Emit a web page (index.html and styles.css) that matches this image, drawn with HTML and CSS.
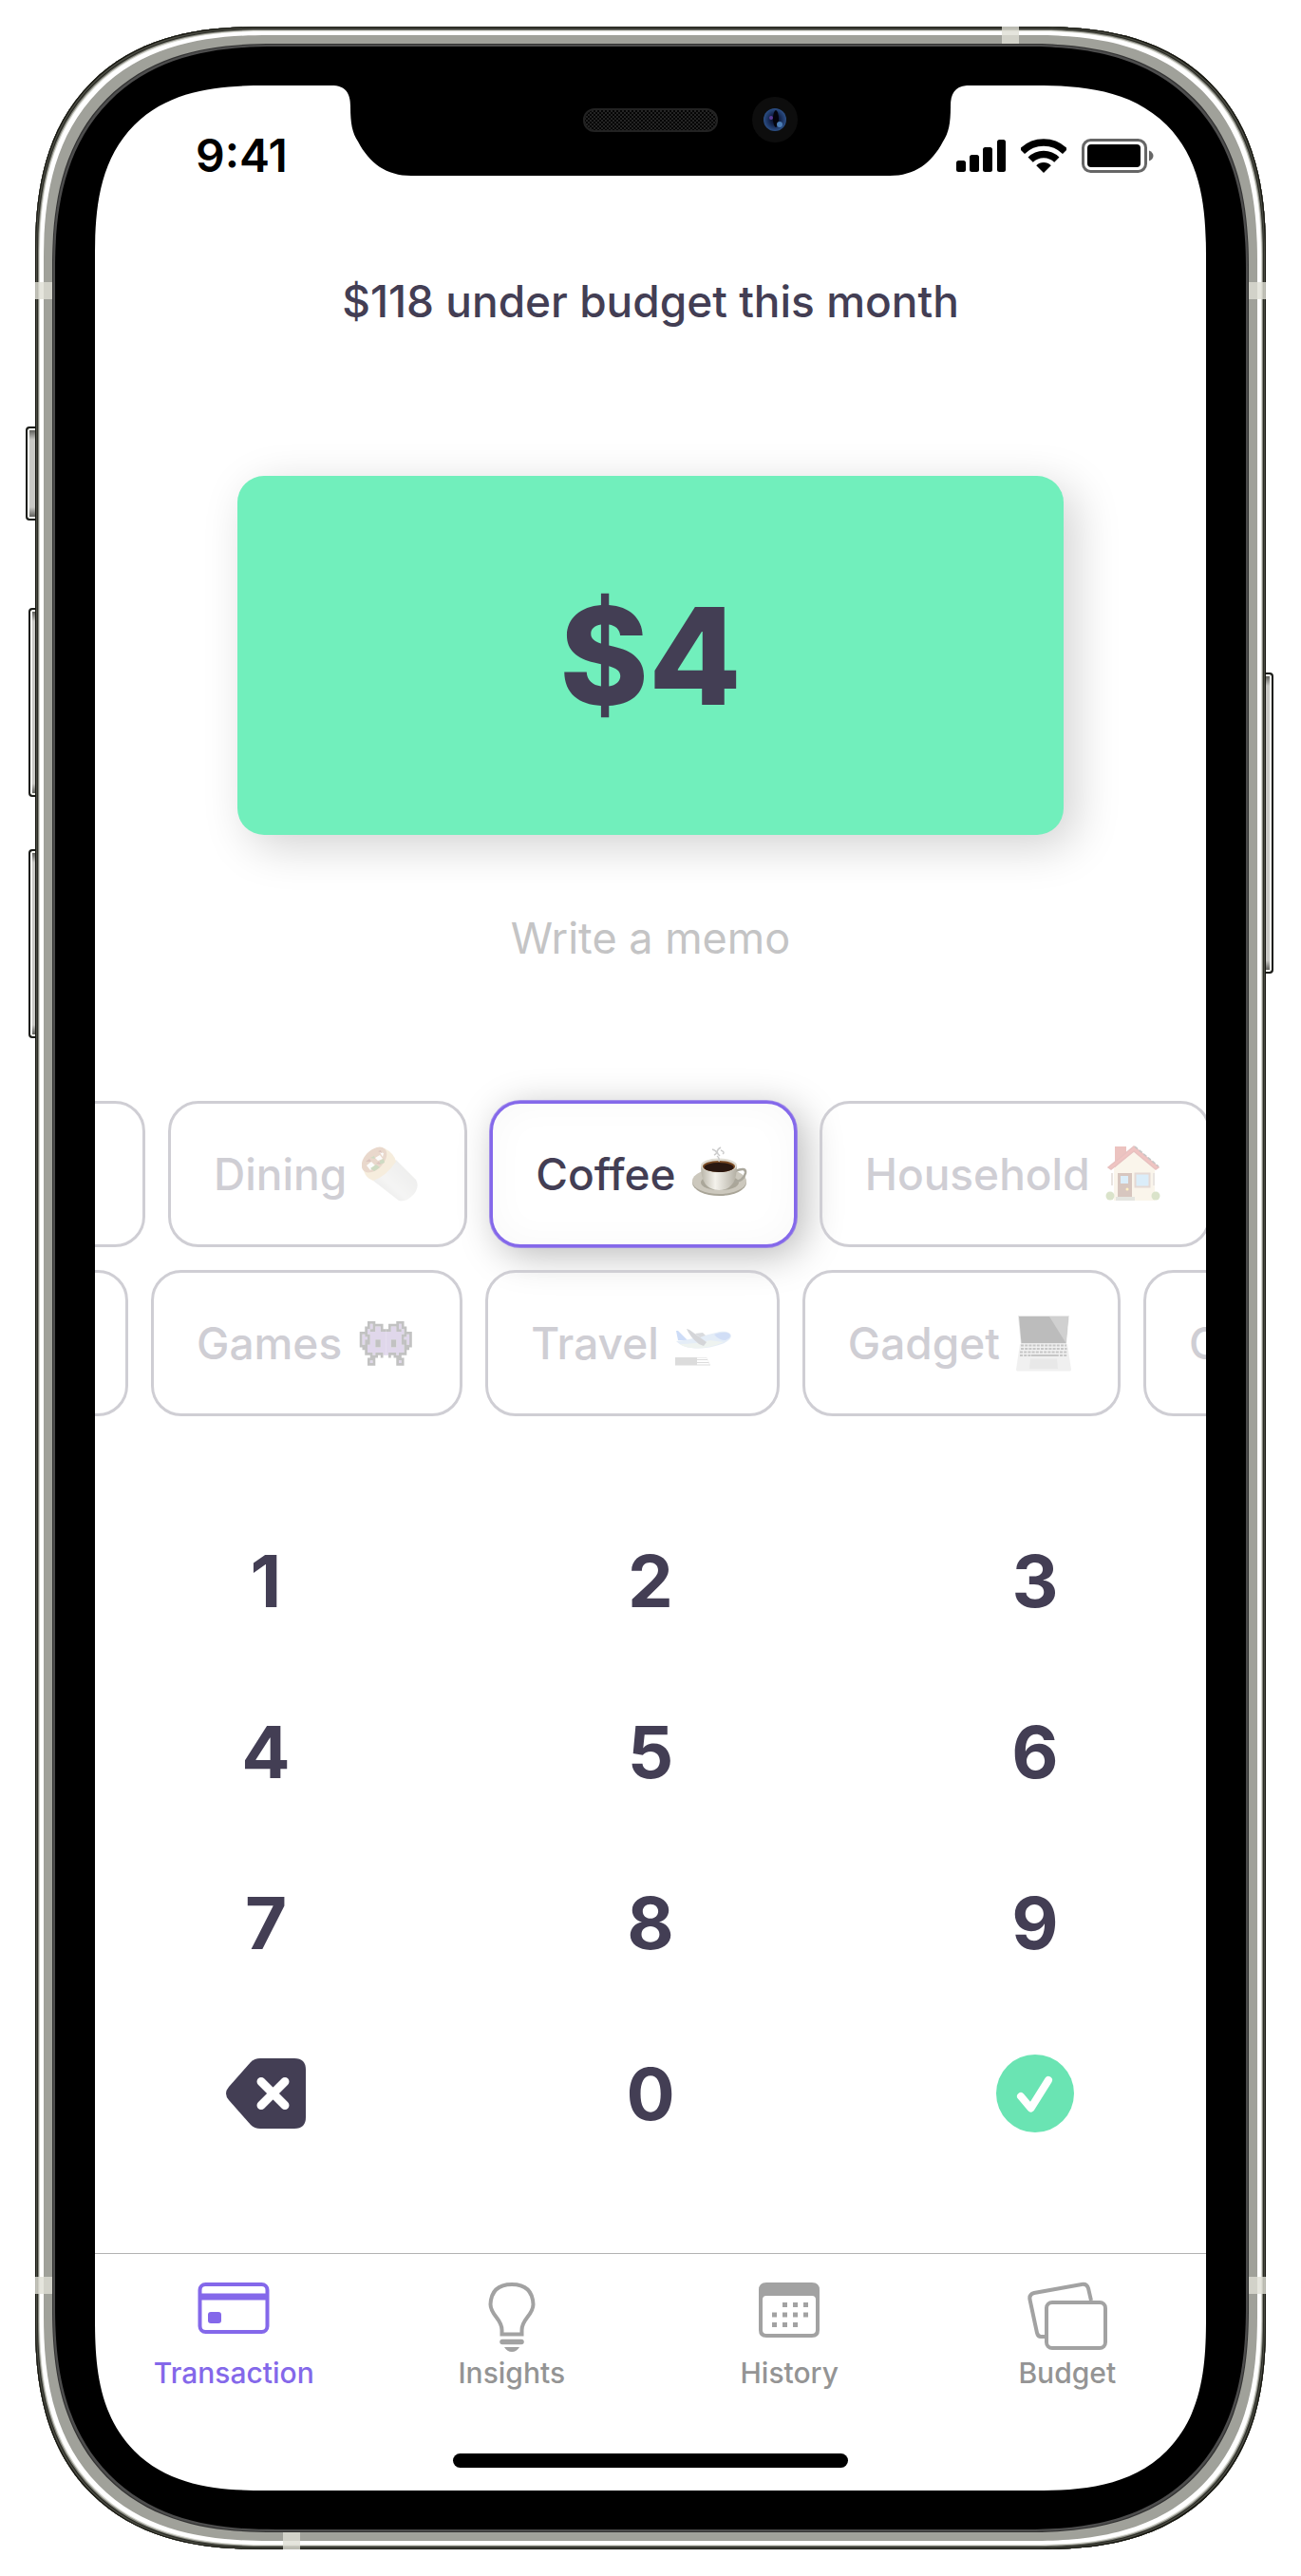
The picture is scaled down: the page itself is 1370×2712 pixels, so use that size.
FILE: index.html
```html
<!DOCTYPE html>
<html lang="en">
<head>
<meta charset="utf-8">
<meta name="viewport" content="width=device-width, initial-scale=1">
<title>Budget – Transaction</title>
<link rel="stylesheet" href="styles.css">
</head>
<body>
<div class="stage">
  <div class="device">
    <span class="side-key side-key--mute"></span>
    <span class="side-key side-key--up"></span>
    <span class="side-key side-key--down"></span>
    <span class="side-key side-key--power"></span>
    <div class="phone">
      <span class="band band--top"></span>
      <span class="band band--bottom"></span>
      <span class="band band--left band--upper"></span>
      <span class="band band--left band--lower"></span>
      <span class="band band--right band--upper"></span>
      <span class="band band--right band--lower"></span>

      <div class="screen">
        <svg class="notch" width="672" height="96" viewBox="0 0 672 96" aria-hidden="true">
          <defs>
            <pattern id="mesh" width="4" height="4" patternUnits="userSpaceOnUse">
              <rect width="4" height="4" fill="#050505"/>
              <rect width="2" height="2" fill="#242424"/>
              <rect x="2" y="2" width="2" height="2" fill="#242424"/>
            </pattern>
            <radialGradient id="lens" cx="50%" cy="50%" r="50%">
              <stop offset="0" stop-color="#06071c"/>
              <stop offset="0.5" stop-color="#14264f"/>
              <stop offset="1" stop-color="#2c4f86"/>
            </radialGradient>
          </defs>
          <path d="M0 0C15 0 20 8 20 22C20 40 22 50 28 59C40 82 58 95 84 95H588C614 95 632 82 644 59C650 50 652 40 652 22C652 8 657 0 672 0Z"/>
          <rect x="266" y="25" width="140" height="23" rx="11" fill="url(#mesh)" stroke="#222" stroke-width="2"/>
          <circle cx="467" cy="36" r="24" fill="#0d0d0d"/>
          <circle cx="467" cy="36" r="12" fill="url(#lens)"/>
          <ellipse cx="468" cy="35" rx="3" ry="9" fill="#04040c"/>
          <circle cx="463" cy="34" r="2" fill="#5b3c96"/>
          <circle cx="472" cy="41" r="3" fill="#4c7db5"/>
        </svg>

        <header class="status">
          <span class="status__time">9:41</span>
          <span class="status__icons">
            <svg width="52" height="36" viewBox="0 0 52 36" aria-hidden="true">
              <rect x="0" y="23" width="10" height="12" rx="2.5"/>
              <rect x="14" y="17" width="10" height="18" rx="2.5"/>
              <rect x="28" y="9" width="10" height="26" rx="2.5"/>
              <rect x="43" y="1" width="9" height="34" rx="2.5"/>
            </svg>
            <svg width="48" height="36" viewBox="0 0 48 36" aria-hidden="true">
              <clipPath id="fan"><path d="M24 36L-13 -1H61Z"/></clipPath>
              <g clip-path="url(#fan)">
                <circle cx="24" cy="36" r="11"/>
                <circle cx="24" cy="36" r="19.5" fill="none" stroke="#000" stroke-width="7.5"/>
                <circle cx="24" cy="36" r="32" fill="none" stroke="#000" stroke-width="7.5"/>
              </g>
            </svg>
            <svg width="76" height="36" viewBox="0 0 76 36" aria-hidden="true">
              <rect x="1.5" y="1.5" width="66" height="33" rx="8" fill="none" stroke="#666" stroke-width="3"/>
              <rect x="6" y="6" width="56" height="24" rx="4"/>
              <path d="M71 12.500C74 13.500 75.500 16 75.500 18S74 22.500 71 23.500Z" fill="#666"/>
            </svg>
          </span>
        </header>

        <main class="entry">
          <p class="summary">$118 under budget this month</p>
          <output class="amount">$4</output>
          <input class="memo" type="text" placeholder="Write a memo" aria-label="Memo">

          <div class="categories">
            <div class="chips">
              <button class="chip chip--cut" type="button" aria-label="Previous category"></button>
              <button class="chip" type="button">Dining
                <svg class="emoji" viewBox="0 0 60 60" aria-hidden="true">
                  <defs>
                    <linearGradient id="foil" x1="0" y1="1" x2="1" y2="0"><stop offset="0" stop-color="#a9a9a7"/><stop offset=".4" stop-color="#dededc"/><stop offset="1" stop-color="#bdbdbb"/></linearGradient>
                  </defs>
                  <path d="M12 37L36 15L57 36Q61 43 55 51Q47 60 39 58Z" fill="url(#foil)"/>
                  <path d="M1 19Q1 33 12 37Q25 33 36 17Q34 8 24 3Z" fill="#e3c592"/>
                  <ellipse cx="13" cy="15" rx="16" ry="10" transform="rotate(-46 13 15)" fill="#b98258"/>
                  <path d="M5 21l5-4l4 4l-5 5zM14 13l5-3l3 4l-5 2zM19 7l4 1l-1 4z" fill="#f8f8f4"/>
                  <path d="M9 24l6-4l4 3l-6 4zM19 16l4-2l1 4l-5 2zM9 13l4-2l1 3z" fill="#5f8a3a"/>
                  <path d="M4 17l4-3l2 3zM15 19l3-2l2 3zM17 6l3-1l1 3z" fill="#8a3f2c"/>
                </svg>
              </button>
              <button class="chip chip--on" type="button" aria-pressed="true">Coffee
                <svg class="emoji" viewBox="0 0 60 60" aria-hidden="true">
                  <defs>
                    <linearGradient id="cup" x1="0" x2="1"><stop offset="0" stop-color="#b9b5a8"/><stop offset=".4" stop-color="#f4f2ec"/><stop offset="1" stop-color="#b3afa3"/></linearGradient>
                  </defs>
                  <ellipse cx="29.500" cy="39" rx="28.500" ry="14" fill="#a9a598"/>
                  <ellipse cx="29.500" cy="37.500" rx="28.500" ry="13.500" fill="#ccc8bd"/>
                  <ellipse cx="30" cy="39" rx="20" ry="8" fill="#aaa699"/>
                  <path d="M46 27Q58 22 57 29Q55 38 43 39" fill="none" stroke="#aaa79c" stroke-width="2.500"/>
                  <path d="M10 21Q10 47 29 47Q48 47 48 21Z" fill="url(#cup)"/>
                  <ellipse cx="29" cy="21" rx="19" ry="7.500" fill="#dedbd2"/>
                  <ellipse cx="29" cy="22" rx="17" ry="6" fill="#7a4a24"/>
                  <ellipse cx="29" cy="23" rx="15.500" ry="5" fill="#2a1710"/>
                  <path d="M24 10Q30 7 22 4M30 11Q24 6 31 2M29 17Q30 13 27 11M33 9Q36 7 31 5" fill="none" stroke="#ccc" stroke-width="1.500"/>
                </svg>
              </button>
              <button class="chip" type="button">Household
                <svg class="emoji" viewBox="0 0 60 60" aria-hidden="true">
                  <rect x="10" y="1" width="12" height="22" fill="#c23c33"/>
                  <path d="M9 24L30 6L52 24V58H9Z" fill="#efe0c0"/>
                  <path d="M3 23L30 1L56 23L53 25L30 6L6 25Z" fill="#cf3f38" stroke="#b53531" stroke-width="1.500"/>
                  <path d="M31 1L56 22" stroke="#444" stroke-width="1.500" stroke-dasharray="4 2"/>
                  <rect x="13" y="29" width="15" height="27" fill="#7d452f"/>
                  <rect x="16" y="32" width="8" height="8" fill="#8cc5ec"/>
                  <rect x="31.500" y="29.500" width="15" height="14" fill="#8cc5ec" stroke="#ab8575" stroke-width="2"/>
                  <circle cx="23" cy="46" r="1.500" fill="#ffd43a"/>
                  <circle cx="5" cy="53" r="4.500" fill="#86a652"/>
                  <circle cx="53" cy="53" r="4.500" fill="#86a652"/>
                  <path d="M7 29v13M51 29v13" stroke="#b8a79a" stroke-width="2"/>
                  <rect x="11" y="54" width="20" height="4" fill="#a7ab9c"/>
                </svg>
              </button>
            </div>
            <div class="chips chips--second">
              <button class="chip chip--cut" type="button" aria-label="Previous category"></button>
              <button class="chip" type="button">Games
                <svg class="emoji" viewBox="-1 -2.500 21.800 21.800" aria-hidden="true">
                  <defs>
                    <g id="half">
                      <path d="M4 1.500h1M4 2.500h1M6 2.500h2M3 3.500h1M6 3.500h2M3 4.500h7M1 5.500h1M4 5.500h6M1 6.500h2M4 6.500h6M1 7.500h1M4 7.500h2M8 7.500h2M1 8.500h1M4 8.500h2M8 8.500h2M3 9.500h3M8 9.500h2M3 10.500h7M3 11.500h7M5 12.500h1M9 12.500h1M4 15.500h1" stroke="#9a7cc0"/>
                      <path d="M3 .5h3M3 1.500h1M5 1.500h4M2 2.500h2M5 2.500h1M8 2.500h1M2 3.500h1M4 3.500h2M8 3.500h2M0 4.500h3M0 5.500h1M2 5.500h2M0 6.500h1M3 6.500h1M0 7.500h1M2 7.500h2M6 7.500h2M0 8.500h1M2 8.500h2M6 8.500h2M0 9.500h3M6 9.500h2M1 10.500h2M2 11.500h1M2 12.500h3M6 12.500h3M4 13.500h3M8 13.500h1M3 14.500h3M3 15.500h1M5 15.500h1M3 16.500h3" stroke="#3a3a3a"/>
                    </g>
                  </defs>
                  <g><use href="#half"/><use href="#half" transform="translate(20 0) scale(-1 1)"/></g>
                </svg>
              </button>
              <button class="chip" type="button">Travel
                <svg class="emoji" viewBox="0 0 60 60" aria-hidden="true">
                  <path d="M4 27L2 17L4 17L14 27Z" fill="#5c8de6"/>
                  <path d="M2 28Q14 27 28 23L48 18Q58 17 60 22Q60 27 50 31Q32 37 18 35Q8 34 2 28Z" fill="#a9c4e8"/>
                  <path d="M6 31Q22 31 38 27L52 29Q34 37 18 35Q10 34 6 31Z" fill="#c9d8cf"/>
                  <path d="M42 21Q52 17 58 20Q61 24 54 27Q47 27 42 21Z" fill="#6a94e3"/>
                  <path d="M13 15L16 16L34 29L31 33L26 31Q17 24 13 15Z" fill="#737882"/>
                  <path d="M22 20L30 19L33 22L27 24Z" fill="#858a94"/>
                  <path d="M1 45H34L38 53.500H1Z" fill="#8f8f8f"/>
                  <path d="M24 45.500H34L35 47H24ZM24 48H35.500L36 50H24ZM24 51H36.500L37 52.500H24Z" fill="#fff"/>
                </svg>
              </button>
              <button class="chip" type="button">Gadget
                <svg class="emoji" viewBox="0 0 60 60" aria-hidden="true">
                  <path d="M3 1H57L54 31H6Z" fill="#b9b9b9"/>
                  <path d="M4 2H56L53.500 30H6.500Z" fill="#262626"/>
                  <path d="M36 2H56L53.500 30Z" fill="#666"/>
                  <path d="M5 31H55L59 58Q59 59.500 56 59.500H4Q1 59.500 1 58Z" fill="#d0d0d0"/>
                  <path d="M6 32.500H54M6 36H54.500M5 39.500H55M5 43H55" stroke="#444" stroke-width="2" stroke-dasharray="3 1.200"/>
                  <path d="M17 43H43" stroke="#444" stroke-width="2"/>
                  <path d="M16 46.500H44L45 57H15Z" fill="#b4b4b4"/>
                </svg>
              </button>
              <button class="chip" type="button">Clothes</button>
            </div>
          </div>

          <div class="keypad">
            <button class="key" type="button">1</button>
            <button class="key" type="button">2</button>
            <button class="key" type="button">3</button>
            <button class="key" type="button">4</button>
            <button class="key" type="button">5</button>
            <button class="key" type="button">6</button>
            <button class="key" type="button">7</button>
            <button class="key" type="button">8</button>
            <button class="key" type="button">9</button>
            <button class="key" type="button" aria-label="Delete">
              <svg width="84" height="74" viewBox="0 0 84 74" aria-hidden="true">
                <path d="M36 0H72Q84 0 84 12V62Q84 74 72 74H36Q30 74 26 70L3 44Q-3 37 3 30L26 4Q30 0 36 0Z" fill="#433e54"/>
                <path d="M37 24.500L62 49.500M62 24.500L37 49.500" stroke="#fff" stroke-width="9" stroke-linecap="round"/>
              </svg>
            </button>
            <button class="key" type="button">0</button>
            <button class="key" type="button" aria-label="Confirm">
              <svg width="82" height="82" viewBox="0 0 82 82" aria-hidden="true">
                <circle cx="41" cy="41" r="41" fill="#6ae4b3"/>
                <path d="M26 44L36.500 56.500L55 27" fill="none" stroke="#fff" stroke-width="8" stroke-linecap="round" stroke-linejoin="round"/>
              </svg>
            </button>
          </div>
        </main>

        <nav class="tabs">
          <a class="tab tab--on" href="#transaction" aria-current="page">
            <svg width="76" height="76" viewBox="0 0 76 76" fill="none" stroke="currentColor" aria-hidden="true">
              <rect x="2.500" y="3" width="71" height="50" rx="6" stroke-width="4"/>
              <path d="M2 16H74" stroke-width="7"/>
              <rect x="11" y="32" width="14" height="12" rx="3" fill="currentColor" stroke="none"/>
            </svg>
            Transaction
          </a>
          <a class="tab" href="#insights">
            <svg width="76" height="76" viewBox="0 0 76 76" fill="none" stroke="#a2a2a2" aria-hidden="true">
              <path d="M27.500 55.500V51Q27.500 45 22 38Q15.500 30 15.500 24Q16.500 3 38 3Q59.500 3 60.500 24Q60.500 30 54 38Q48.500 45 48.500 51V55.500Z" stroke-width="4"/>
              <path d="M28 63.500H48" stroke-width="5.500" stroke-linecap="round"/>
              <path d="M30 69H46Q43 74 38 74T30 69Z" fill="#a2a2a2" stroke="none"/>
            </svg>
            Insights
          </a>
          <a class="tab" href="#history">
            <svg width="76" height="76" viewBox="0 0 76 76" fill="#a2a2a2" aria-hidden="true">
              <path fill-rule="evenodd" d="M14 1H62Q70 1 70 9V51Q70 59 62 59H14Q6 59 6 51V9Q6 1 14 1ZM14 15Q10 15 10 19V51Q10 55 14 55H62Q66 55 66 51V19Q66 15 62 15Z"/>
              <path d="M31 24.500H58M20 35H58M20 45.500H47" fill="none" stroke="#a2a2a2" stroke-width="5" stroke-dasharray="5 6"/>
            </svg>
            History
          </a>
          <a class="tab" href="#budget">
            <svg width="84" height="76" viewBox="0 0 84 76" fill="none" stroke="#a2a2a2" stroke-width="4" aria-hidden="true">
              <path d="M18 58H15Q11 58.500 10 54L2.500 19Q1.500 13.500 7 12L57 3Q62.500 2 64 7L67 20"/>
              <rect x="20" y="22" width="62" height="48" rx="6"/>
            </svg>
            Budget
          </a>
        </nav>
        <div class="home"></div>
      </div>
    </div>
  </div>
</div>
</body>
</html>
```
FILE: styles.css
```css
* {
  box-sizing: border-box;
}

body {
  margin: 0;
  background: #fff;
  color: #433e54;
  font-family: Inter, "Liberation Sans", sans-serif;
  font-size: 46px;
  line-height: 56px;
}

button,
input {
  font: inherit;
  color: inherit;
}

button {
  margin: 0;
  padding: 0;
  border: 0;
  background: none;
}

svg {
  display: block;
  flex: none;
}

.stage {
  padding: 28px 37px;
}

/* ---------- device ---------- */

.device {
  position: relative;
  z-index: 0;
}

.phone {
  position: relative;
  padding: 62px 63px;
  border-radius: 198px;
  background: #000;
  box-shadow:
    inset 0 0 0 1px #15150f,
    inset 0 0 0 2px #4b4c43,
    inset 0 0 0 3px #2b2c26,
    inset 0 0 0 4px #85867d,
    inset 0 0 0 5px #d5d6cf,
    inset 0 0 0 9px #fff,
    inset 0 0 0 18px #a0a19a,
    inset 0 0 0 19px #333,
    inset 0 0 0 21px #4d4d4d;
}

.screen {
  position: relative;
  display: flex;
  flex-direction: column;
  overflow: hidden;
  border-radius: 140px;
  background: #fff;
}

@supports (corner-shape: superellipse(1.4)) {
  .phone {
    border-radius: 240px;
    corner-shape: superellipse(1.3);
  }

  .screen {
    border-radius: 180px;
    corner-shape: superellipse(1.4);
  }
}

.band {
  position: absolute;
  width: 18px;
  height: 18px;
  background: rgba(222, 222, 212, 0.8);
}

.band--top { top: 0; right: 260px; }
.band--bottom { bottom: 0; left: 261px; }
.band--left { left: 0; }
.band--right { right: 0; }
.band--upper { top: 269px; }
.band--lower { bottom: 269px; }

.side-key {
  position: absolute;
  z-index: -1;
  width: 20px;
  border: 2px solid #1c1d19;
  border-radius: 4px;
  background: linear-gradient(#4a4a46, #c9c9c5 12px, #c9c9c5 calc(100% - 12px), #4a4a46);
  box-shadow: inset 0 0 0 2px #f4f5ef;
}

.side-key--mute { top: 421px; left: -10px; height: 99px; }
.side-key--up { top: 612px; left: -7px; height: 199px; }
.side-key--down { top: 866px; left: -7px; height: 199px; }
.side-key--power { top: 680px; right: -8px; height: 317px; }

.notch {
  position: absolute;
  top: 0;
  left: 50%;
  margin-left: -336px;
}

/* ---------- status bar ---------- */

.status {
  display: flex;
  justify-content: space-between;
  align-items: center;
  height: 141px;
  padding: 7px 55px 0 106px;
  color: #000;
}

.status__time {
  font-size: 48px;
  font-weight: 600;
}

.status__icons {
  display: flex;
  gap: 16px;
}

/* ---------- transaction entry ---------- */

.entry {
  display: flex;
  flex-direction: column;
  align-items: center;
}

.summary {
  margin: 58px 0 0;
  font-weight: 500;
}

.amount {
  display: flex;
  align-items: center;
  justify-content: center;
  width: calc(100% - 300px);
  height: 378px;
  margin-top: 156px;
  border-radius: 28px;
  background: #71efbc;
  box-shadow: 12px 12px 48px rgba(0, 0, 0, 0.18);
  font-size: 142px;
  line-height: 176px;
  font-weight: 800;
}

.memo {
  width: calc(100% - 300px);
  height: 56px;
  margin-top: 81px;
  padding: 0;
  border: 0;
  background: none;
  font-size: 45px;
  text-align: center;
}

.memo::placeholder {
  color: #c4c4c5;
  opacity: 1;
}

.categories {
  display: flex;
  flex-direction: column;
  gap: 24px;
  width: 100%;
  margin-top: 143px;
}

.chips {
  display: flex;
  gap: 24px;
}

.chip {
  display: flex;
  flex: none;
  align-items: center;
  gap: 16px;
  height: 154px;
  padding: 0 48px 0 45px;
  border: 3px solid #cfced4;
  border-radius: 32px;
  color: #cfced4;
  font-weight: 500;
}

.chip--cut {
  width: 93px;
  margin-left: -40px;
  padding: 0;
}

.chips--second .chip--cut {
  margin-left: -58px;
}

.chip--on {
  border-color: #8468ea;
  background: #fff;
  box-shadow:
    0 0 0 1px rgba(132, 104, 234, 0.7),
    8px 8px 40px rgba(0, 0, 0, 0.28),
    inset 0 0 40px rgba(0, 0, 0, 0.03);
  color: #433e54;
}

.emoji {
  width: 60px;
  height: 60px;
  opacity: 0.3;
}

.chip--on .emoji {
  opacity: 1;
}

.keypad {
  display: grid;
  grid-template-columns: repeat(3, 1fr);
  grid-auto-rows: 180px;
  column-gap: 45px;
  width: 100%;
  margin-top: 83px;
}

.key {
  display: flex;
  align-items: center;
  justify-content: center;
  font-size: 76px;
  line-height: 92px;
  font-weight: 700;
}

/* ---------- tab bar ---------- */

.tabs {
  display: grid;
  grid-template-columns: repeat(4, 1fr);
  margin-top: 78px;
  padding-top: 29px;
  border-top: 1px solid #b2b2b2;
}

.tab {
  display: flex;
  flex-direction: column;
  align-items: center;
  gap: 2px;
  color: #949494;
  font-size: 30px;
  line-height: 36px;
  font-weight: 500;
  text-decoration: none;
}

.tab--on {
  color: #8468ea;
}

.home {
  align-self: center;
  width: 416px;
  height: 15px;
  margin: 67px 0 24px;
  border-radius: 8px;
  background: #000;
}
```
